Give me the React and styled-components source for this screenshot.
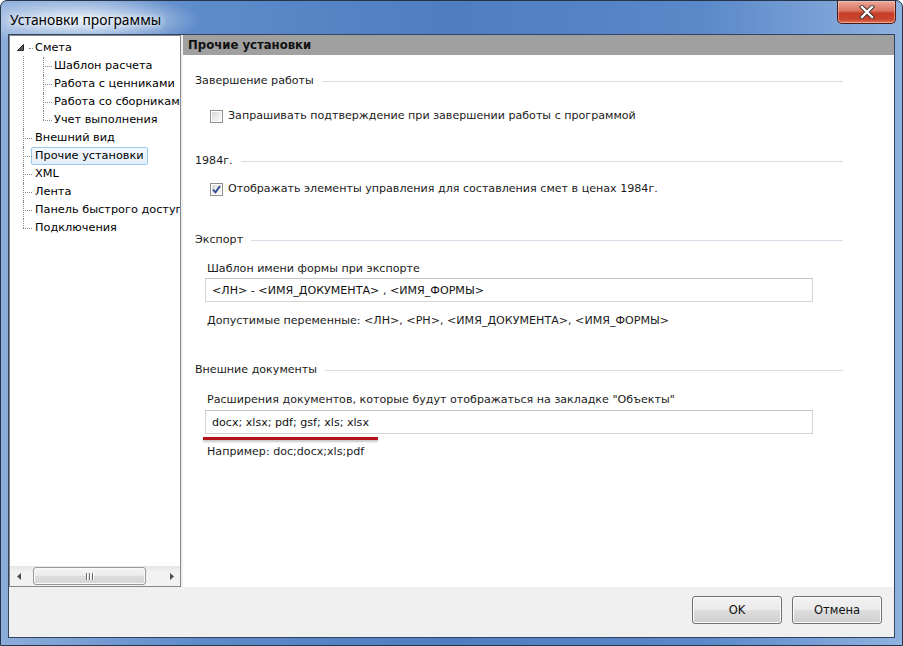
import React from 'react';
import styled, { createGlobalStyle } from 'styled-components';

const GlobalStyle = createGlobalStyle`
  html, body { margin: 0; padding: 0; width: 903px; height: 646px; overflow: hidden; background: #fff; }
  body { font-family: "DejaVu Sans", Tahoma, sans-serif; font-size: 11.1px; color: #1b1b1b; }
  * { box-sizing: border-box; }
`;

const Window = styled.div`
  width: 903px;
  height: 646px;
  display: flex;
  flex-direction: column;
  border: 1px solid #27354a;
  border-radius: 7px 7px 0 0;
  background:
    radial-gradient(ellipse 120px 26px at 80px 19px, rgba(236, 242, 250, 0.95), rgba(236, 242, 250, 0)),
    linear-gradient(90deg, #8cadda 0%, #5d8bca 22%, #4e7ec1 50%, #5a88c9 78%, #8fb2df 100%);
`;

const TitleBar = styled.div`
  height: 33px;
  display: flex;
  justify-content: space-between;
  align-items: flex-start;
`;

const Title = styled.div`
  padding: 10px 0 0 9px;
  font-family: "Noto Sans", "Open Sans", sans-serif;
  font-size: 13.8px;
  line-height: 18px;
  color: #000;
  text-shadow: 0 0 6px #fff, 0 0 10px rgba(255, 255, 255, 0.9);
`;

const CloseButton = styled.div`
  width: 59px;
  height: 23px;
  margin-right: 6px;
  border: 1px solid #4a1a14;
  border-top: none;
  border-radius: 0 0 5px 5px;
  display: flex;
  align-items: center;
  justify-content: center;
  background: linear-gradient(180deg, #eaa99c 0%, #d9735f 45%, #c73c25 55%, #c9472f 85%, #e07a5f 100%);
  box-shadow: inset 0 0 0 1px rgba(255, 210, 200, 0.5);
`;

const Client = styled.div`
  flex: 1;
  margin: 0 7px 7px 7px;
  border: 1px solid #34445e;
  background: #f0f0f0;
  display: flex;
  flex-direction: column;
  min-height: 0;
`;

const Main = styled.div`
  flex: 1;
  display: flex;
  gap: 2px;
  min-height: 0;
`;

const TreePanel = styled.div`
  width: 172px;
  border: 1px solid #828790;
  background: #fff;
  display: flex;
  flex-direction: column;
`;

const TreeBody = styled.div`
  flex: 1;
  overflow: hidden;
  padding-top: 3px;
  font-size: 11.3px;
`;

const TreeList = styled.ul`
  list-style: none;
  margin: 0;
  padding: 0;
`;

const TopItem = styled.li`
  position: relative;
  padding-left: 25px;
  white-space: nowrap;

  &::before {
    content: "";
    position: absolute;
    left: 13px;
    top: ${p => (p.$expanded ? '17px' : '0')};
    bottom: 0;
    border-left: 1px dotted #8a8a8a;
  }
  &:last-child::before {
    bottom: auto;
    height: 9px;
  }
  &::after {
    content: "";
    position: absolute;
    left: ${p => (p.$expanded ? '19px' : '13px')};
    top: 9px;
    width: ${p => (p.$expanded ? '4px' : '9px')};
    border-top: 1px dotted #8a8a8a;
  }
`;

const ChildItem = styled.li`
  position: relative;
  padding-left: 19px;
  white-space: nowrap;

  &::before {
    content: "";
    position: absolute;
    left: 8px;
    top: 0;
    bottom: 0;
    border-left: 1px dotted #8a8a8a;
  }
  &:last-child::before {
    bottom: auto;
    height: 9px;
  }
  &::after {
    content: "";
    position: absolute;
    left: 8px;
    top: 9px;
    width: 9px;
    border-top: 1px dotted #8a8a8a;
  }
`;

const Expander = styled.span`
  position: absolute;
  left: 7px;
  top: 5px;
  width: 8px;
  height: 8px;
  display: flex;
`;

const NodeLabel = styled.span`
  display: inline-block;
  height: 18px;
  line-height: 16px;
  padding: 0 3px;
  margin-left: -4px;
  border: 1px solid ${p => (p.$selected ? '#9ccaeb' : 'transparent')};
  border-radius: 2px;
  background: ${p => (p.$selected ? 'linear-gradient(180deg, #f3f8fd, #e4effb)' : 'transparent')};
  color: #000;
`;

const HScroll = styled.div`
  height: 20px;
  display: flex;
  align-items: stretch;
  background: linear-gradient(180deg, #e6e6e6, #f2f2f2 30%, #f2f2f2);
`;

const ScrollArrow = styled.div`
  width: 17px;
  display: flex;
  align-items: center;
  justify-content: center;
`;

const ScrollTrack = styled.div`
  flex: 1;
  padding: 1px 0 1px 6px;
  display: flex;
`;

const Thumb = styled.div`
  width: 113px;
  border: 1px solid #979797;
  border-radius: 3px;
  background: linear-gradient(180deg, #f5f5f5 0%, #ebebeb 50%, #dcdcdc 51%, #d6d6d6 100%);
  box-shadow: inset 0 0 0 1px #fafafa;
  display: flex;
  align-items: center;
  justify-content: center;
  gap: 2px;
`;

const Grip = styled.span`
  width: 1px;
  height: 7px;
  background: #6e6e6e;
  box-shadow: 1px 0 0 #fff;
`;

const ContentPanel = styled.div`
  flex: 1;
  background: #fff;
  display: flex;
  flex-direction: column;
`;

const PanelHeader = styled.div`
  height: 20px;
  line-height: 20px;
  padding-left: 5px;
  background: #a0a0a0;
  font-weight: bold;
  font-size: 11.7px;
  color: #111;
`;

const PanelBody = styled.div`
  padding: 18px 51px 0 12px;
`;

const SectionTitle = styled.div`
  margin-top: ${p => p.$top || 0}px;
  display: flex;
  align-items: center;
  gap: 8px;
  line-height: 16px;
  &::after {
    content: "";
    flex: 1;
    height: 1px;
    background: #d5dde6;
  }
`;

const CheckRow = styled.label`
  margin: ${p => p.$top || 0}px 0 0 15px;
  display: flex;
  align-items: center;
  gap: 5px;
  line-height: 16px;
`;

const Box = styled.span`
  width: 13px;
  height: 13px;
  border: 1px solid #8e8f8f;
  background: #fff;
  padding: 1px;
  display: flex;
`;

const BoxInner = styled.span`
  flex: 1;
  background: linear-gradient(135deg, #d8d8d8, #f4f4f4 80%);
  display: flex;
  align-items: center;
  justify-content: center;
`;

const FieldLabel = styled.div`
  margin: ${p => p.$top || 0}px 0 0 12px;
  line-height: 16px;
`;

const TextField = styled.input`
  display: block;
  width: 608px;
  height: 24px;
  margin: ${p => p.$top || 0}px 0 0 10px;
  padding: 0 6px;
  border: 1px solid #d4d4d4;
  border-top-color: #c5c5c5;
  font: inherit;
  color: #111;
  background: #fff;
  outline: none;
`;

const Underline = styled.div`
  width: 175px;
  height: 3px;
  margin: 3px 0 0 8px;
  background: #b3121b;
  box-shadow: 0 2px 2px rgba(0, 0, 0, 0.22);
`;

const Footer = styled.div`
  height: 50px;
  display: flex;
  justify-content: flex-end;
  align-items: flex-start;
  gap: 10px;
  padding: 9px 12px 0 0;
`;

const Button = styled.button`
  width: 90px;
  height: 28px;
  border: 1px solid #707070;
  border-radius: 3px;
  background: linear-gradient(180deg, #f2f2f2 0%, #ebebeb 48%, #dddddd 52%, #cfcfcf 100%);
  box-shadow: inset 0 0 0 1px #fbfbfb;
  font: inherit;
  font-size: 11.5px;
  color: #111;
  padding: 0;
`;

const Check = () => (
  <svg width="9" height="9" viewBox="0 0 9 9">
    <path d="M1 4.6 L3.5 7.3 L8 1" fill="none" stroke="#2d4596" strokeWidth="1.8" />
  </svg>
);

const CheckBox = ({ checked }) => (
  <Box>
    <BoxInner>{checked && <Check />}</BoxInner>
  </Box>
);

const tree = [
  { label: 'Смета', children: ['Шаблон расчета', 'Работа с ценниками', 'Работа со сборникам', 'Учет выполнения'] },
  { label: 'Внешний вид' },
  { label: 'Прочие установки', selected: true },
  { label: 'XML' },
  { label: 'Лента' },
  { label: 'Панель быстрого доступа' },
  { label: 'Подключения' },
];

export default function App() {
  return (
    <>
      <GlobalStyle />
      <Window>
        <TitleBar>
          <Title>Установки программы</Title>
          <CloseButton>
            <svg width="16" height="14" viewBox="0 0 16 14">
              <path d="M3 2 L13 12 M13 2 L3 12" stroke="#3b2a28" strokeWidth="4.2" strokeLinecap="square" />
              <path d="M3 2 L13 12 M13 2 L3 12" stroke="#fff" strokeWidth="2.4" strokeLinecap="square" />
            </svg>
          </CloseButton>
        </TitleBar>
        <Client>
          <Main>
            <TreePanel>
              <TreeBody>
                <TreeList>
                  {tree.map(node => (
                    <TopItem key={node.label} $expanded={!!node.children}>
                      {node.children && (
                        <Expander>
                          <svg width="8" height="8" viewBox="0 0 8 8">
                            <path d="M6.5 0.5 L6.5 6.5 L0.5 6.5 Z" fill="#595959" stroke="#262626" strokeWidth="1" />
                          </svg>
                        </Expander>
                      )}
                      <NodeLabel $selected={node.selected}>{node.label}</NodeLabel>
                      {node.children && (
                        <TreeList>
                          {node.children.map(c => (
                            <ChildItem key={c}>
                              <NodeLabel>{c}</NodeLabel>
                            </ChildItem>
                          ))}
                        </TreeList>
                      )}
                    </TopItem>
                  ))}
                </TreeList>
              </TreeBody>
              <HScroll>
                <ScrollArrow>
                  <svg width="4" height="7" viewBox="0 0 4 7"><path d="M4 0 L0 3.5 L4 7 Z" fill="#4d4d4d" /></svg>
                </ScrollArrow>
                <ScrollTrack>
                  <Thumb>
                    <Grip /><Grip /><Grip />
                  </Thumb>
                </ScrollTrack>
                <ScrollArrow>
                  <svg width="4" height="7" viewBox="0 0 4 7"><path d="M0 0 L4 3.5 L0 7 Z" fill="#4d4d4d" /></svg>
                </ScrollArrow>
              </HScroll>
            </TreePanel>
            <ContentPanel>
              <PanelHeader>Прочие установки</PanelHeader>
              <PanelBody>
                <SectionTitle>Завершение работы</SectionTitle>
                <CheckRow $top={19}>
                  <CheckBox />
                  Запрашивать подтверждение при завершении работы с программой
                </CheckRow>

                <SectionTitle $top={29}>1984г.</SectionTitle>
                <CheckRow $top={12}>
                  <CheckBox checked />
                  Отображать элементы управления для составления смет в ценах 1984г.
                </CheckRow>

                <SectionTitle $top={35}>Экспорт</SectionTitle>
                <FieldLabel $top={13}>Шаблон имени формы при экспорте</FieldLabel>
                <TextField $top={1} readOnly value="<ЛН> - <ИМЯ_ДОКУМЕНТА> , <ИМЯ_ФОРМЫ>" />
                <FieldLabel $top={11}>Допустимые переменные: &lt;ЛН&gt;, &lt;РН&gt;, &lt;ИМЯ_ДОКУМЕНТА&gt;, &lt;ИМЯ_ФОРМЫ&gt;</FieldLabel>

                <SectionTitle $top={33}>Внешние документы</SectionTitle>
                <FieldLabel $top={14}>Расширения документов, которые будут отображаться на закладке "Объекты"</FieldLabel>
                <TextField $top={2} readOnly value="docx; xlsx; pdf; gsf; xls; xlsx" />
                <Underline />
                <FieldLabel $top={4}>Например: doc;docx;xls;pdf</FieldLabel>
              </PanelBody>
            </ContentPanel>
          </Main>
          <Footer>
            <Button>OK</Button>
            <Button>Отмена</Button>
          </Footer>
        </Client>
      </Window>
    </>
  );
}
